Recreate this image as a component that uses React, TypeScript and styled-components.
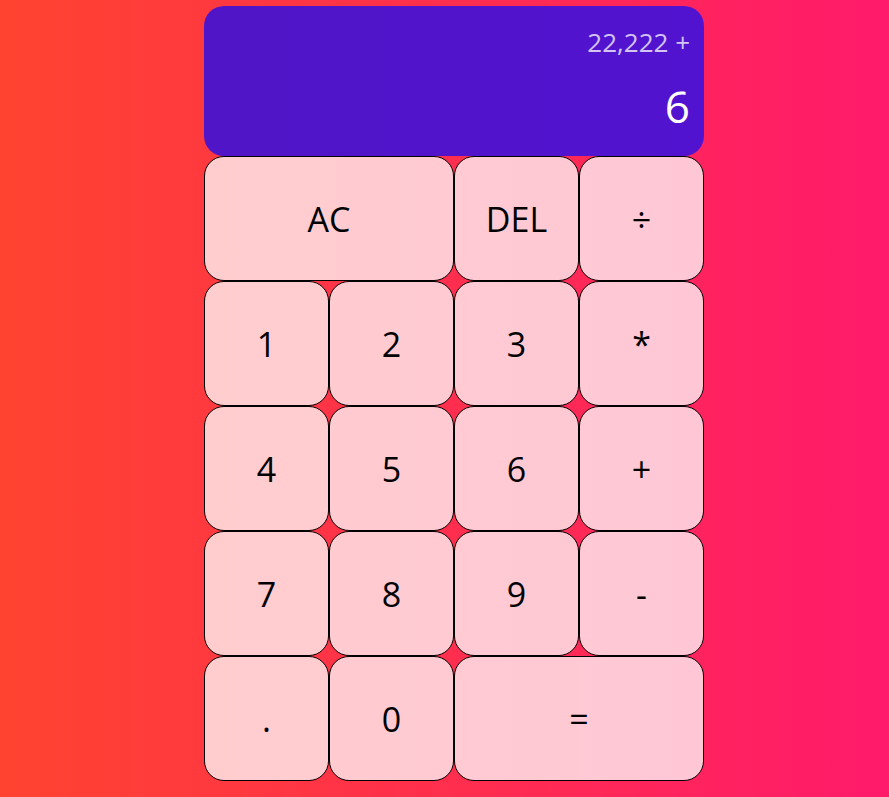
import React from "react";
import styled, { createGlobalStyle } from "styled-components";

const GlobalStyle = createGlobalStyle`
  *, *::before, *::after {
    box-sizing: border-box;
  }
  body {
    margin: 0;
    font-family: "Open Sans", "Noto Sans", sans-serif;
    background: linear-gradient(to right, #ff4330, #ff1a6b);
    min-height: 100vh;
  }
`;

const Grid = styled.div`
  display: grid;
  justify-content: center;
  grid-template-columns: repeat(4, 125px);
  grid-template-rows: 150px repeat(5, 125px);
  padding: 6px 0 0 19px;
`;

const Display = styled.div`
  grid-column: 1 / -1;
  background: linear-gradient(to right, #5015c6, #5213d0);
  border-radius: 20px;
  display: flex;
  flex-direction: column;
  align-items: flex-end;
  justify-content: space-around;
  padding: 10px 14px 12px;
  word-wrap: break-word;
  word-break: break-all;
`;

const Previous = styled.div`
  color: rgba(255, 255, 255, 0.75);
  font-size: 26px;
  line-height: 1.2;
`;

const Current = styled.div`
  color: white;
  font-size: 44px;
  line-height: 1.2;
`;

const Key = styled.button<{ $wide?: boolean }>`
  grid-column: ${(p) => (p.$wide ? "span 2" : "auto")};
  font-family: "Open Sans", "Noto Sans", sans-serif;
  font-size: 34px;
  color: #000;
  border: 1px solid #000;
  border-radius: 20px;
  outline: none;
  background-color: rgba(255, 255, 255, 0.75);
  cursor: pointer;
  padding: 0;
`;

const keys: { label: string; wide?: boolean }[] = [
  { label: "AC", wide: true },
  { label: "DEL" },
  { label: "÷" },
  { label: "1" },
  { label: "2" },
  { label: "3" },
  { label: "*" },
  { label: "4" },
  { label: "5" },
  { label: "6" },
  { label: "+" },
  { label: "7" },
  { label: "8" },
  { label: "9" },
  { label: "-" },
  { label: "." },
  { label: "0" },
  { label: "=", wide: true },
];

export default function App() {
  return (
    <>
      <GlobalStyle />
      <Grid>
        <Display>
          <Previous>22,222 +</Previous>
          <Current>6</Current>
        </Display>
        {keys.map((k) => (
          <Key key={k.label} $wide={k.wide}>
            {k.label}
          </Key>
        ))}
      </Grid>
    </>
  );
}
